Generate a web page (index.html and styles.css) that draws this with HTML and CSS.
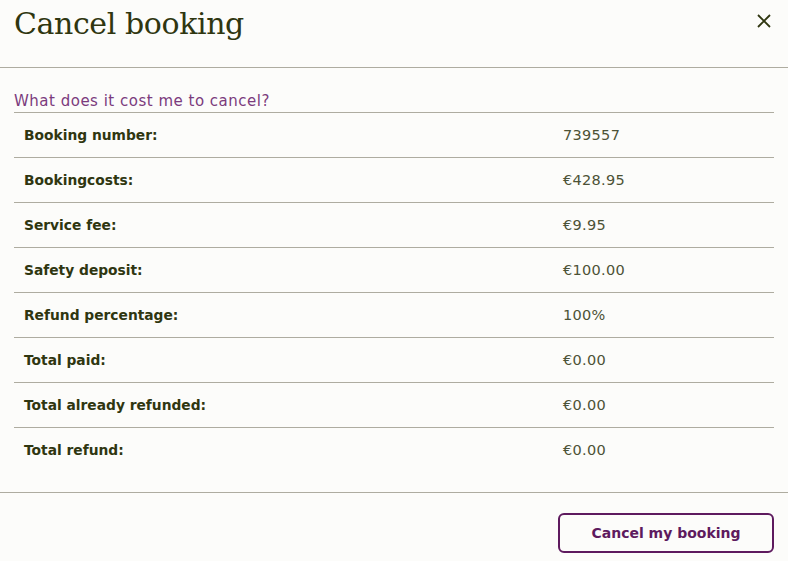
FILE: index.html
```html
<!DOCTYPE html>
<html>
<head>
<meta charset="utf-8">
<link rel="stylesheet" href="styles.css">
</head>
<body>
<div class="modal">
  <header class="modal-header">
    <h1 class="title">Cancel booking</h1>
    <button class="close" aria-label="Close">
      <svg width="14" height="14" viewBox="0 0 14 14"><path d="M1 1L13 13M13 1L1 13" stroke="#2f3610" stroke-width="1.8" fill="none"/></svg>
    </button>
  </header>
  <section class="modal-body">
    <div class="subtitle">What does it cost me to cancel?</div>
    <table class="costs">
      <tr><th>Booking number:</th><td>739557</td></tr>
      <tr><th>Bookingcosts:</th><td>€428.95</td></tr>
      <tr><th>Service fee:</th><td>€9.95</td></tr>
      <tr><th>Safety deposit:</th><td>€100.00</td></tr>
      <tr><th>Refund percentage:</th><td>100%</td></tr>
      <tr><th>Total paid:</th><td>€0.00</td></tr>
      <tr><th>Total already refunded:</th><td>€0.00</td></tr>
      <tr><th>Total refund:</th><td>€0.00</td></tr>
    </table>
  </section>
  <footer class="modal-footer">
    <button class="btn-cancel">Cancel my booking</button>
  </footer>
</div>
</body>
</html>
```
FILE: styles.css
```css
* { box-sizing: border-box; }
html, body { margin: 0; padding: 0; background: #fcfcfa; }
body { font-family: "DejaVu Sans", "Liberation Sans", sans-serif; color: #2f3610; }
.modal { width: 788px; height: 561px; display: flex; flex-direction: column; }
.modal-header {
  height: 68px; border-bottom: 1px solid #aeaca0;
  display: flex; justify-content: space-between; align-items: flex-start;
  padding: 0 17px 0 14px;
}
.title {
  margin: 4px 0 0 0; font-family: "DejaVu Serif", "Liberation Serif", serif;
  font-weight: normal; font-size: 30px; line-height: 40px; color: #2f3610;
  letter-spacing: -0.4px;
}
.close { background: none; border: 0; padding: 0; margin-top: 14px; width: 14px; height: 14px; cursor: pointer; display: flex; }
.modal-body { padding: 22px 14px 0 14px; height: 425px; border-bottom: 1px solid #aeaca0; }
.subtitle { color: #7b3b7d; font-size: 15px; letter-spacing: 0.5px; line-height: 22px; height: 22px; }
.costs { width: 100%; border-collapse: collapse; border-top: 1px solid #aeaca0; }
.costs tr { height: 45px; border-bottom: 1px solid #aeaca0; }
.costs tr:last-child { border-bottom: 0; }
.costs th { text-align: left; font-weight: bold; font-size: 13.8px; padding: 0 0 0 10px; width: 549px; color: #2f3610; }
.costs td { font-size: 14.5px; letter-spacing: 0.3px; color: #4c5236; padding: 0; }
.modal-footer { display: flex; justify-content: flex-end; padding: 20px 14px 0 14px; }
.btn-cancel {
  width: 216px; height: 40px; border: 2px solid #5e1a5e; border-radius: 6px;
  background: #fcfcfa; color: #5e1a5e; font-family: "DejaVu Sans", "Liberation Sans", sans-serif;
  font-size: 14px; font-weight: bold; cursor: pointer;
}
```
